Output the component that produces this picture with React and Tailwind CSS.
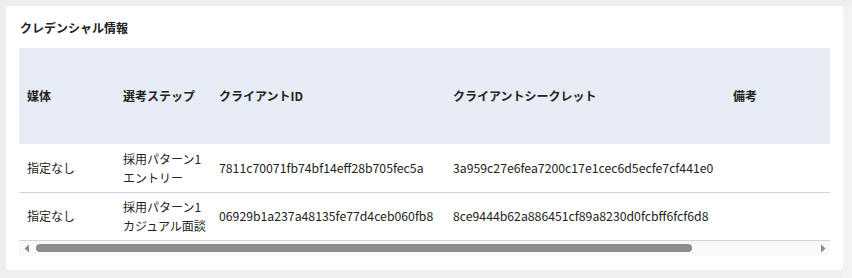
const rows = [
  {
    media: '指定なし',
    step: ['採用パターン1', 'エントリー'],
    id: '7811c70071fb74bf14eff28b705fec5a',
    secret: '3a959c27e6fea7200c17e1cec6d5ecfe7cf441e0',
  },
  {
    media: '指定なし',
    step: ['採用パターン1', 'カジュアル面談'],
    id: '06929b1a237a48135fe77d4ceb060fb8',
    secret: '8ce9444b62a886451cf89a8230d0fcbff6fcf6d8',
  },
];

function ScrollBar() {
  return (
    <div className="h-[15px] bg-[#f9f9f9] flex items-center">
      <div className="w-[15px] h-full flex items-center justify-center">
        <svg width="6" height="9" viewBox="0 0 6 9">
          <path d="M5 0.5 L0.5 4.5 L5 8.5 Z" fill="#8a8a8a" />
        </svg>
      </div>
      <div className="flex-1 h-full flex items-center px-[2px]">
        <div className="w-[656px] h-[8px] rounded-full bg-[#8c8c8c]" />
      </div>
      <div className="w-[15px] h-full flex items-center justify-center">
        <svg width="6" height="9" viewBox="0 0 6 9">
          <path d="M1 0.5 L5.5 4.5 L1 8.5 Z" fill="#8a8a8a" />
        </svg>
      </div>
    </div>
  );
}

export default function App() {
  return (
    <div
      className="w-[852px] h-[278px] bg-[#efeff2] pt-[6px] pl-[6px] text-[#222] flex"
      style={{ fontFamily: '"Noto Sans CJK JP", "Noto Sans", sans-serif' }}
    >
      <section className="w-[837px] h-[264px] bg-white rounded-[4px] px-[13px] pt-[13px]">
        <h2 className="text-[12px] leading-[18px] font-bold pl-[1px]">クレデンシャル情報</h2>
        <div className="mt-[11px] overflow-hidden">
          <table className="w-[967px] border-collapse text-[12px] text-left table-fixed">
            <colgroup>
              <col className="w-[96px]" />
              <col className="w-[96px]" />
              <col className="w-[234px]" />
              <col className="w-[280px]" />
              <col />
            </colgroup>
            <thead>
              <tr className="bg-[#e8ecf6] h-[96px]">
                <th className="px-2 font-bold">媒体</th>
                <th className="px-2 font-bold">選考ステップ</th>
                <th className="px-2 font-bold">クライアントID</th>
                <th className="px-2 font-bold">クライアントシークレット</th>
                <th className="px-2 font-bold">備考</th>
              </tr>
            </thead>
            <tbody>
              {rows.map((r) => (
                <tr key={r.id} className="h-[48px] border-b border-[#ccd5e6]">
                  <td className="px-2">{r.media}</td>
                  <td className="pl-2 leading-[19px] whitespace-nowrap">
                    {r.step[0]}
                    <br />
                    {r.step[1]}
                  </td>
                  <td className="px-2 text-[12.25px]">{r.id}</td>
                  <td className="px-2 text-[12.25px]">{r.secret}</td>
                  <td className="px-2"></td>
                </tr>
              ))}
            </tbody>
          </table>
        </div>
        <ScrollBar />
      </section>
      <div className="ml-auto w-[9px] bg-[#f3f3f5]" />
    </div>
  );
}
